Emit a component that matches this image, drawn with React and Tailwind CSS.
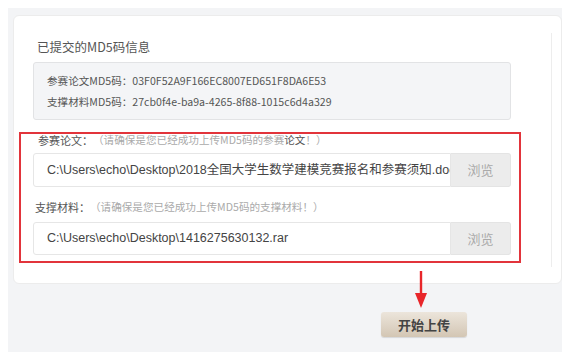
import React from 'react';

const cjk = "font-['Microsoft_YaHei','Noto_Sans_CJK_SC',sans-serif] [text-spacing-trim:space-all]";
const latin = "font-['Liberation_Sans','Noto_Sans_CJK_SC',sans-serif]";

const FileRow = ({ path, height }) => (
  <div className={`ml-[12px] w-[478px] flex ${height}`}>
    <div className="w-[418px] h-full border border-[#e6e6e6] rounded-l-[3px] bg-white flex items-center pl-[13px] overflow-hidden">
      <span className={`${latin} text-[12.5px] text-[#444] whitespace-nowrap`}>{path}</span>
    </div>
    <div className={`w-[60px] h-full bg-[#ececec] border border-[#e4e4e4] border-l-0 rounded-r-[3px] flex items-center justify-center ${cjk} text-[13px] text-[#aaa]`}>
      浏览
    </div>
  </div>
);

const Label = ({ title, note, className }) => (
  <div className={`h-[12px] flex items-center whitespace-nowrap text-[11px] ${className}`}>
    <span className="text-[11px] text-[#555]">{title}</span>
    <span className="text-[10.6px] text-[#aaa]">{note}</span>
  </div>
);

const App = () => {
  return (
    <div className={`relative w-[568px] h-[361px] bg-white pt-2 pl-2 overflow-hidden ${cjk}`}>
      {/* gray panel */}
      <div className="w-[554px] h-[344px] bg-[#f3f4f6] pt-[7px] pl-[5px]">
        {/* white card */}
        <div className="w-[549px] h-[269px] bg-white rounded-md border border-[#ececec] pt-[17px]">
          <div className="w-[538px] h-[234px] border-r border-[#ededed]">
            <div className="pt-[6px] pl-[23px] text-[12.5px] leading-[16px] text-[#555]">已提交的MD5码信息</div>

            {/* md5 info */}
            <div className="mt-[7px] ml-[19px] w-[478px] bg-[#f4f5f7] border border-[#e2e3e5] rounded-[3px] py-[7px] pl-[13px] text-[10.6px] leading-[21px] text-[#555]">
              <div>参赛论文MD5码：03F0F52A9F166EC8007ED651F8DA6E53</div>
              <div>支撑材料MD5码：27cb0f4e-ba9a-4265-8f88-1015c6d4a329</div>
            </div>

            {/* highlighted upload area */}
            <div className="mt-[12px] ml-[5px] w-[502px] border-2 border-[#e2343b] pb-[6px]">
              <Label
                className="pl-[17px]"
                title="参赛论文："
                note={<>（请确保是您已经成功上传MD5码的参赛<span className="text-[#555]">论文</span>！）</>}
              />
              <div className="mt-[7px]">
                <FileRow path="C:\Users\echo\Desktop\2018全国大学生数学建模竞赛报名和参赛须知.doc" height="h-[34px]" />
              </div>
              <Label
                className="mt-[14px] pl-[14px]"
                title="支撑材料："
                note="（请确保是您已经成功上传MD5码的支撑材料！）"
              />
              <div className="mt-[9px]">
                <FileRow path="C:\Users\echo\Desktop\1416275630132.rar" height="h-[33px]" />
              </div>
            </div>
          </div>
        </div>

        {/* submit */}
        <div className="mt-[28px] ml-[368px] w-[86px] h-[25px] rounded-[3px] bg-gradient-to-b from-[#ece5db] to-[#d3c6b4] shadow-[0_1px_1px_rgba(0,0,0,0.12)] flex items-center justify-center text-[13px] font-bold text-[#444]">
          开始上传
        </div>
      </div>

      {/* red annotation arrow */}
      <svg className="absolute left-[415px] top-[271px]" width="12" height="37" viewBox="0 0 12 37">
        <rect x="4.8" y="0" width="2.4" height="24" fill="#e8262a" />
        <polygon points="0,22 12,22 6,37" fill="#e8262a" />
      </svg>
    </div>
  );
};

export default App;
